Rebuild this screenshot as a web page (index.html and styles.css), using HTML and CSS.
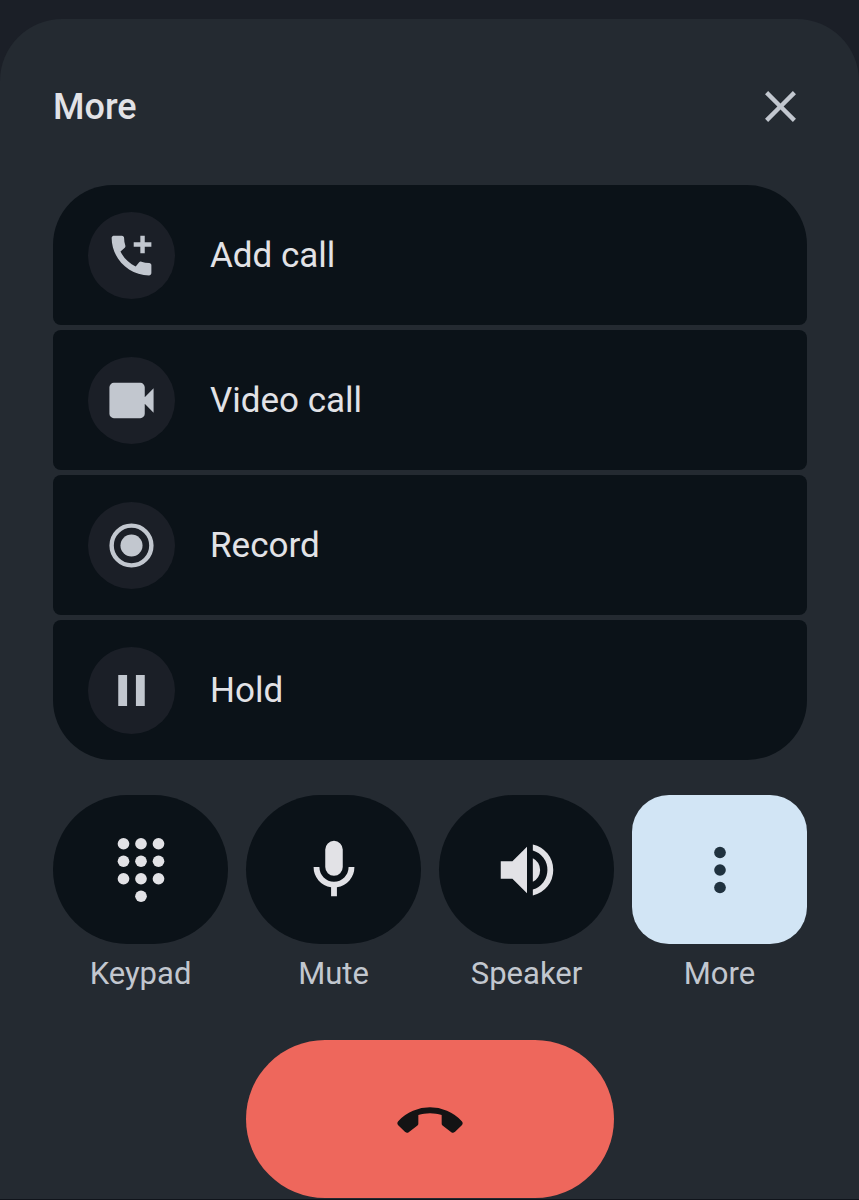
FILE: index.html
```html
<!DOCTYPE html>
<html lang="en">
<head>
  <meta charset="UTF-8" />
  <meta name="viewport" content="width=device-width, initial-scale=1.0"/>
  <title>Call - More</title>
  <link rel="stylesheet" href="styles.css">
</head>
<body>
  <main class="sheet">
    <header class="sheet-header">
      <h1>More</h1>
      <button type="button" class="close" aria-label="Close">
        <svg class="icon" viewBox="0 -960 960 960"><path d="m256-200-56-56 224-224-224-224 56-56 224 224 224-224 56 56-224 224 224 224-56 56-224-224-224 224Z"/></svg>
      </button>
    </header>

    <!-- Extra call options -->
    <div class="options">
      <button type="button" class="option">
        <span class="badge"><svg class="icon" viewBox="0 0 24 24"><path d="M16 11V8h-3V6h3V3h2v3h3v2h-3v3z"/><path d="M20.01 15.38c-1.23 0-2.42-.2-3.53-.56-.35-.12-.74-.03-1.01.24l-1.570 1.970c-2.830-1.350-5.480-3.900-6.890-6.830l1.950-1.660c.27-.28.35-.67.24-1.020-.37-1.110-.56-2.300-.56-3.530 0-.54-.45-.99-.99-.99H4.190C3.650 3 3 3.240 3 3.990 3 13.280 10.730 21 20.010 21c.71 0 .99-.63.99-1.180v-3.450c0-.54-.45-.99-.99-.99z"/></svg></span>
        <span class="text">Add call</span>
      </button>
      <button type="button" class="option">
        <span class="badge"><svg class="icon" viewBox="0 -960 960 960"><path d="M160-160q-33 0-56.500-23.500T80-240v-480q0-33 23.500-56.500T160-800h480q33 0 56.500 23.500T720-720v180l160-160v440L720-420v180q0 33-23.500 56.500T640-160H160Z"/></svg></span>
        <span class="text">Video call</span>
      </button>
      <button type="button" class="option">
        <span class="badge"><svg class="icon" viewBox="0 0 24 24"><circle cx="12" cy="12" r="9" fill="none" stroke="currentColor" stroke-width="2"/><circle cx="12" cy="12" r="5"/></svg></span>
        <span class="text">Record</span>
      </button>
      <button type="button" class="option">
        <span class="badge"><svg class="icon" viewBox="0 0 24 24"><path d="M6 5h4v14H6zM14 5h4v14h-4z"/></svg></span>
        <span class="text">Hold</span>
      </button>
    </div>

    <!-- Main call controls -->
    <div class="controls">
      <div class="control">
        <button type="button" class="pill" aria-labelledby="keypad-label">
          <svg class="icon" viewBox="0 0 24 24"><circle cx="6" cy="3" r="2"/><circle cx="12" cy="3" r="2"/><circle cx="18" cy="3" r="2"/><circle cx="6" cy="9" r="2"/><circle cx="12" cy="9" r="2"/><circle cx="18" cy="9" r="2"/><circle cx="6" cy="15" r="2"/><circle cx="12" cy="15" r="2"/><circle cx="18" cy="15" r="2"/><circle cx="12" cy="21" r="2"/></svg>
        </button>
        <span class="label" id="keypad-label">Keypad</span>
      </div>
      <div class="control">
        <button type="button" class="pill" aria-labelledby="mute-label">
          <svg class="icon" viewBox="0 -960 960 960"><path d="M480-400q-50 0-85-35t-35-85v-240q0-50 35-85t85-35q50 0 85 35t35 85v240q0 50-35 85t-85 35Zm-40 280v-123q-104-14-172-93t-68-184h80q0 83 58.500 141.500T480-320q83 0 141.500-58.500T680-520h80q0 105-68 184t-172 93v123h-80Z"/></svg>
        </button>
        <span class="label" id="mute-label">Mute</span>
      </div>
      <div class="control">
        <button type="button" class="pill" aria-labelledby="speaker-label">
          <svg class="icon" viewBox="0 -960 960 960"><path d="M560-131v-82q90-26 145-100t55-168q0-94-55-168T560-749v-82q124 28 202 125.500T840-481q0 127-78 224.500T560-131ZM120-360v-240h160l200-200v640L280-360H120Zm440 40v-322q47 22 73.500 66t26.500 96q0 51-26.500 94.500T560-320Z"/></svg>
        </button>
        <span class="label" id="speaker-label">Speaker</span>
      </div>
      <div class="control">
        <button type="button" class="pill active" aria-labelledby="more-label" aria-pressed="true">
          <svg class="icon" viewBox="0 0 24 24"><circle cx="12" cy="6" r="2"/><circle cx="12" cy="12" r="2"/><circle cx="12" cy="18" r="2"/></svg>
        </button>
        <span class="label" id="more-label">More</span>
      </div>
      <button type="button" class="end-call" aria-label="End call">
        <svg class="icon" viewBox="0 -960 960 960"><path d="m136-304-92-90q-12-12-12-28t12-28q88-95 203-142.500T480-640q118 0 232.500 47.500T916-450q12 12 12 28t-12 28l-92 90q-11 11-25.500 12t-26.500-8l-116-88q-8-6-12-14t-4-18v-114q-38-12-78-19t-82-7q-42 0-82 7t-78 19v114q0 10-4 18t-12 14l-116 88q-12 9-26.500 8T136-304Z"/></svg>
      </button>
    </div>
  </main>
</body>
</html>
```
FILE: styles.css
```css
* {
  box-sizing: border-box;
}
body {
  margin: 0;
  padding-top: 19px;
  font-family: Roboto, "Liberation Sans", sans-serif;
  background-color: #1b1f27;
  color: #e2e2e6;
}
button {
  display: flex;
  align-items: center;
  justify-content: center;
  margin: 0;
  padding: 0;
  border: 0;
  background: none;
  color: inherit;
  font: inherit;
  cursor: pointer;
}
.icon {
  display: block;
  width: 53px;
  height: 53px;
  fill: currentColor;
}
.sheet {
  padding: 61px 52px 1px 53px;
  background-color: #242a31;
  border-bottom: 1px solid #10141b;
  border-radius: 62px 62px 0 0;
}
.sheet-header {
  display: flex;
  align-items: center;
  justify-content: space-between;
  margin-bottom: 52px;
}
h1 {
  margin: 0;
  font-size: 36px;
  font-weight: 500;
  line-height: 40px;
}
.close {
  color: #c2c7cf;
}

/* option list */
.options {
  display: flex;
  flex-direction: column;
  gap: 5px;
  margin-bottom: 35px;
}
.option {
  justify-content: flex-start;
  gap: 35px;
  height: 140px;
  padding: 0 35px;
  background-color: #0b1218;
  border-radius: 8px;
  font-size: 35px;
  line-height: 40px;
}
.option:first-child {
  border-radius: 60px 60px 8px 8px;
}
.option:last-child {
  border-radius: 8px 8px 60px 60px;
}
.badge {
  display: flex;
  align-items: center;
  justify-content: center;
  width: 87px;
  height: 87px;
  border-radius: 50%;
  background-color: #1b1f27;
  color: #c2c7cf;
}
.text {
  padding-top: 2px;
}

/* bottom buttons */
.controls {
  display: grid;
  grid-template-columns: repeat(4, 1fr);
  column-gap: 18px;
  row-gap: 48px;
}
.control {
  display: flex;
  flex-direction: column;
  gap: 12px;
}
.controls .icon {
  width: 70px;
  height: 70px;
}
.pill {
  height: 149px;
  border-radius: 75px;
  background-color: #0b1218;
}
.pill.active {
  border-radius: 37px;
  background-color: #d2e5f5;
  color: #20323f;
}
.label {
  color: #c2c7cf;
  font-size: 31px;
  line-height: 36px;
  text-align: center;
}
.end-call {
  grid-column: 2 / span 2;
  height: 158px;
  border-radius: 79px;
  background-color: #ee675c;
  color: #131314;
}
```
